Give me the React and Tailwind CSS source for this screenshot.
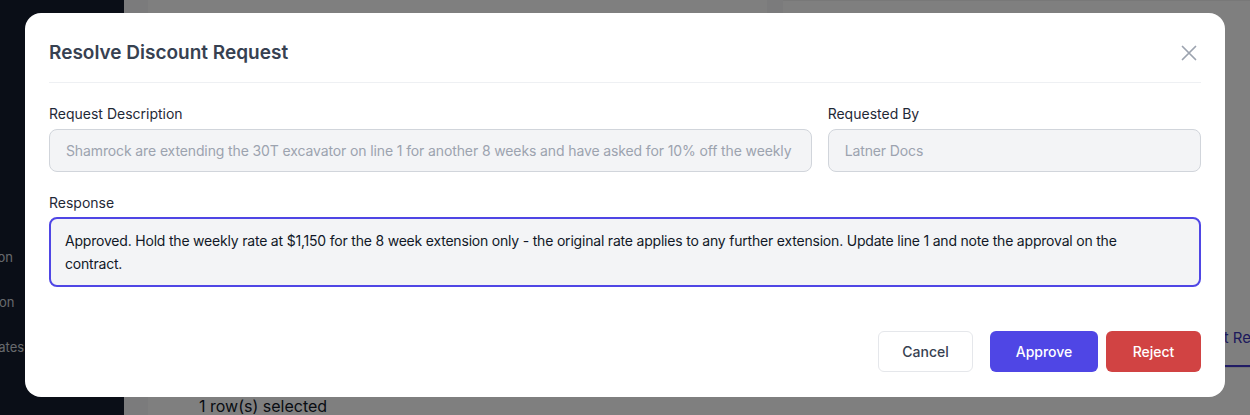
import React from "react";

export default function App() {
  const font = { fontFamily: "Inter, 'Noto Sans', sans-serif" };
  return (
    <div className="relative w-[1250px] h-[415px] overflow-hidden flex bg-white" style={font}>
      {/* Sidebar */}
      <aside className="w-[124px] h-full bg-[#141c2e] flex flex-col pt-[247px] gap-[25px] text-[13px] text-[#cfd3da] shrink-0">
        <div className="h-[20px] leading-[20px] -ml-[40px] whitespace-nowrap">Location</div>
        <div className="h-[20px] leading-[20px] -ml-[47px] whitespace-nowrap">Collection</div>
        <div className="h-[20px] leading-[20px] -ml-[10px] whitespace-nowrap">Rates</div>
      </aside>

      {/* Main page */}
      <main className="flex-1 h-full bg-[#f6f7f9] flex flex-col">
        <div className="flex gap-4 px-6 h-[120px] shrink-0">
          <div className="w-[619px] bg-white"></div>
          <div className="flex-1 bg-white border-t border-[#f0f0f0]"></div>
        </div>
        <div className="flex-1 bg-white mx-6 flex flex-col">
          <div className="mt-[203px] flex border-b border-[#e5e7eb] shrink-0">
            <div className="ml-[1018px] pb-[16px] border-b-2 border-[#4338ca] text-[15px] leading-[22px] text-[#3b34b8] whitespace-nowrap pr-4 pt-[4px]">
              Discount Requests
            </div>
          </div>
          <div className="pl-[51px] pt-[26px] text-[16px] leading-6 text-[#111827] whitespace-nowrap shrink-0">1 row(s) selected</div>
        </div>
      </main>

      {/* Overlay */}
      <div className="absolute inset-0 bg-black/50"></div>

      {/* Modal */}
      <div className="absolute left-[25px] top-[13px] w-[1200px] h-[384px] bg-white rounded-2xl px-6 flex flex-col">
        <div className="pt-[26px] pb-[15px] border-b border-[#eef0f3] flex items-center justify-between">
          <h2 className="text-[19px] leading-7 font-semibold text-[#374151]">Resolve Discount Request</h2>
          <svg width="16" height="16" viewBox="0 0 16 16" className="mr-[4px]" fill="none" stroke="#9ca3af" strokeWidth="1.75" strokeLinecap="round">
            <path d="M1.5 1.5 L14.5 14.5 M14.5 1.5 L1.5 14.5" />
          </svg>
        </div>

        <div className="pt-[21px] grid grid-cols-3 gap-x-4">
          <div className="col-span-2 flex flex-col">
            <label className="text-[14px] leading-5 text-[#1f2937] mb-[5px]">Request Description</label>
            <div className="h-[43px] rounded-lg border border-[#d1d5db] bg-[#f3f4f6] px-4 flex items-center text-[14px] tracking-[-0.12px] text-[#9ca3af]">
              <div className="overflow-hidden whitespace-nowrap w-full">
                Shamrock are extending the 30T excavator on line 1 for another 8 weeks and have asked for 10% off the weekly rate for the extension period.
              </div>
            </div>
          </div>
          <div className="flex flex-col">
            <label className="text-[14px] leading-5 text-[#1f2937] mb-[5px]">Requested By</label>
            <div className="h-[43px] rounded-lg border border-[#d1d5db] bg-[#f3f4f6] px-4 flex items-center text-[14px] tracking-[-0.12px] text-[#9ca3af]">
              <div className="overflow-hidden whitespace-nowrap w-full">Latner Docs</div>
            </div>
          </div>
        </div>

        <div className="mt-[21px] flex flex-col">
          <label className="text-[14px] leading-5 text-[#1f2937] mb-[4px]">Response</label>
          <div className="h-[70px] rounded-lg border-2 border-[#4f46e5] bg-[#f3f4f6] pl-[14px] pr-[30px] py-[10px] text-[14px] tracking-[-0.2px] leading-[23px] text-[#111827]">
            Approved. Hold the weekly rate at $1,150 for the 8 week extension only - the original rate applies to any further extension. Update line 1 and note the approval on the contract.
          </div>
        </div>

        <div className="mt-[44px] flex justify-end items-center">
          <button className="w-[95px] h-[41px] rounded-md border border-[#e5e7eb] bg-white text-[14px] font-medium text-[#374151] mr-[17px]">Cancel</button>
          <button className="w-[108px] h-[41px] rounded-md bg-[#4f46e5] text-[14px] font-medium text-white mr-[8px]">Approve</button>
          <button className="w-[95px] h-[41px] rounded-md bg-[#d14343] text-[14px] font-medium text-white">Reject</button>
        </div>
      </div>
    </div>
  );
}
